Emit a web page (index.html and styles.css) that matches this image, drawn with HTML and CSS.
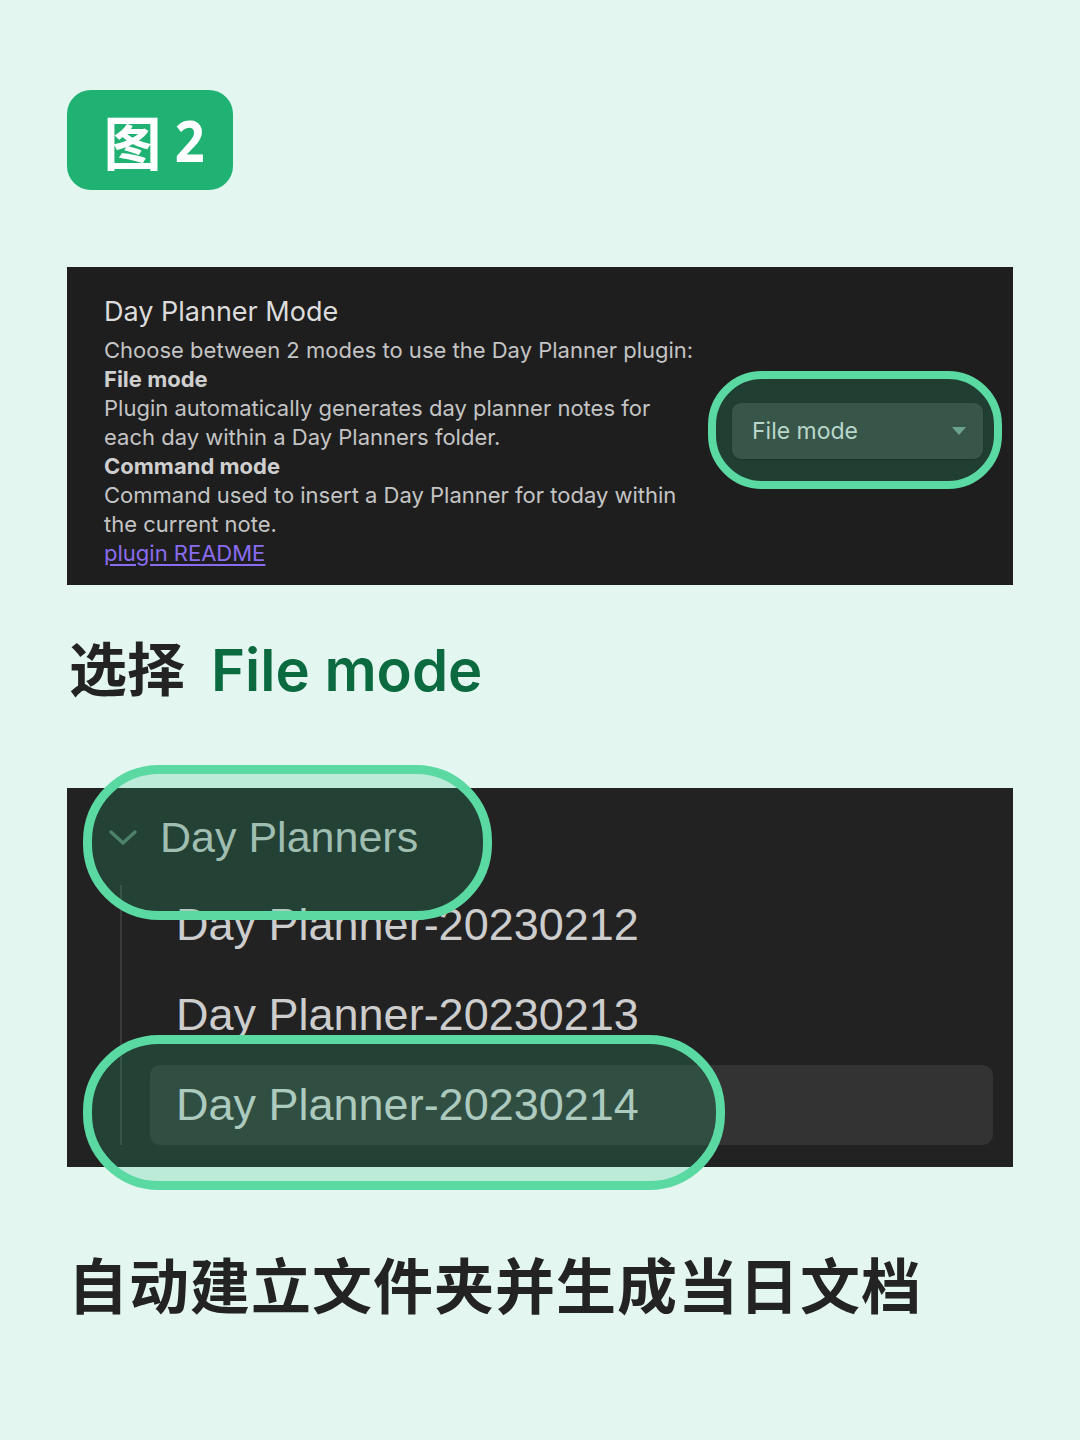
FILE: index.html
```html
<!DOCTYPE html>
<html lang="zh-CN">
<head>
<meta charset="utf-8">
<title>图 2</title>
<link rel="stylesheet" href="styles.css">
</head>
<body>
<main class="page">
  <div class="badge">图<span class="badge-num">2</span></div>

  <section class="settings">
    <div class="settings-text">
      <div class="settings-title">Day Planner Mode</div>
      <div class="settings-desc">
        <div>Choose between 2 modes to use the Day Planner plugin:</div>
        <div class="strong">File mode</div>
        <div>Plugin automatically generates day planner notes for<br>each day within a Day Planners folder.</div>
        <div class="strong">Command mode</div>
        <div>Command used to insert a Day Planner for today within<br>the current note.</div>
        <a class="readme" href="#">plugin README</a>
      </div>
    </div>
    <div class="select-wrap">
      <div class="select">
        <span>File mode</span>
        <svg class="caret" width="16" height="10" viewBox="0 0 16 10"><path d="M1 1 L15 1 L8 9 Z" fill="#7e9d8f"/></svg>
      </div>
      <div class="ring ring-select"></div>
    </div>
  </section>

  <h2 class="caption caption-mid">选择<span class="accent">File mode</span></h2>

  <section class="tree">
    <div class="folder">
      <svg class="chevron" width="30" height="18" viewBox="0 0 30 18"><path d="M3 3 L15 14 L27 3" fill="none" stroke="#577565" stroke-width="3.4" stroke-linecap="round" stroke-linejoin="round"/></svg>
      <span>Day Planners</span>
    </div>
    <div class="children">
      <div class="file">Day Planner-20230212</div>
      <div class="file">Day Planner-20230213</div>
      <div class="file active">Day Planner-20230214</div>
    </div>
    <div class="ring ring-folder"></div>
    <div class="ring ring-file"></div>
  </section>

  <h2 class="caption caption-bottom">自动建立文件夹并生成当日文档</h2>
</main>
</body>
</html>
```

FILE: styles.css
```css
* { box-sizing: border-box; }

html, body {
  margin: 0;
  padding: 0;
  background: #e3f7f0;
}

body {
  width: 1080px;
  height: 1440px;
  overflow: hidden;
  font-family: Inter, "Noto Sans", "Noto Sans CJK SC", sans-serif;
}

.page {
  padding: 90px 67px 0 67px;
}

.badge {
  width: 166px;
  height: 100px;
  border-radius: 24px;
  background: #1fb273;
  color: #ffffff;
  display: flex;
  align-items: center;
  justify-content: center;
  gap: 12px;
  padding-left: 10px;
  font-family: "Noto Sans CJK SC", sans-serif;
  font-weight: 700;
  font-size: 58px;
  line-height: 1;
}

.badge-num {
  font-family: "Noto Sans", sans-serif;
  font-weight: 700;
  font-size: 58px;
  transform: scaleX(0.9);
}

/* ---------- settings panel ---------- */
.settings {
  margin-top: 77px;
  height: 318px;
  background: #1e1e1e;
  display: flex;
  align-items: center;
  justify-content: space-between;
  padding: 0 30px 0 37px;
}

.settings-text {
  padding-top: 10px;
}

.settings-title {
  color: #dcdcdc;
  font-size: 27px;
  line-height: 34px;
  margin-bottom: 7px;
}

.settings-desc {
  color: #c4c4c4;
  font-size: 22px;
  line-height: 29px;
}

.settings-desc .strong {
  font-weight: 700;
  color: #cfcfcf;
}

.readme {
  color: #8a6cf0;
  text-decoration: underline;
  text-underline-offset: 3px;
}

.select-wrap {
  position: relative;
  margin-top: 10px;
}

.select {
  width: 251px;
  height: 56px;
  border-radius: 9px;
  background: #3b3b3b;
  box-shadow: 0 1px 2px rgba(0,0,0,0.35);
  display: flex;
  align-items: center;
  justify-content: space-between;
  padding: 0 16px 0 20px;
  color: #dedede;
  font-size: 23px;
}

.caret { display: block; }

.ring {
  position: absolute;
  border: 9px solid #5bd9a3;
  background: rgba(40, 190, 128, 0.2);
}

.ring-select {
  left: -24px;
  right: -19px;
  top: -32px;
  bottom: -30px;
  border-width: 8px;
  border-radius: 54px;
}

/* ---------- captions ---------- */
.caption {
  margin: 0;
  color: #232323;
  font-weight: 700;
  font-family: "Noto Sans CJK SC", sans-serif;
}

.caption-mid {
  margin-top: 46px;
  font-size: 58px;
  line-height: 70px;
  padding-left: 2px;
}

.accent {
  color: #0b6a40;
  font-family: Inter, sans-serif;
  font-weight: 600;
  font-size: 58px;
  margin-left: 26px;
}

.caption-bottom {
  margin-top: 81px;
  font-size: 60px;
  line-height: 70px;
  letter-spacing: 1px;
  padding-left: 1px;
}

/* ---------- file tree ---------- */
.tree {
  position: relative;
  margin-top: 83px;
  background: #222222;
  height: 379px;
  padding: 9px 20px 0 41px;
  font-family: "Liberation Sans", Arial, sans-serif;
}

.folder {
  height: 80px;
  display: flex;
  align-items: center;
  gap: 22px;
  color: #bdbdbd;
  font-size: 43px;
  margin-bottom: 8px;
}

.chevron {
  display: block;
  margin-top: 2px;
}

.children {
  margin-left: 12px;
  border-left: 2px solid #3a3a3a;
  display: flex;
  flex-direction: column;
  gap: 10px;
}

.file {
  height: 80px;
  margin-left: 28px;
  padding-left: 26px;
  display: flex;
  align-items: center;
  color: #cdcdcd;
  font-size: 45px;
  border-radius: 10px;
}

.file.active {
  background: #333333;
}

.ring-folder {
  left: 16px;
  top: -23px;
  width: 409px;
  height: 155px;
  border-radius: 76px;
}

.ring-file {
  left: 16px;
  top: 247px;
  width: 642px;
  height: 155px;
  border-radius: 76px;
}
```
